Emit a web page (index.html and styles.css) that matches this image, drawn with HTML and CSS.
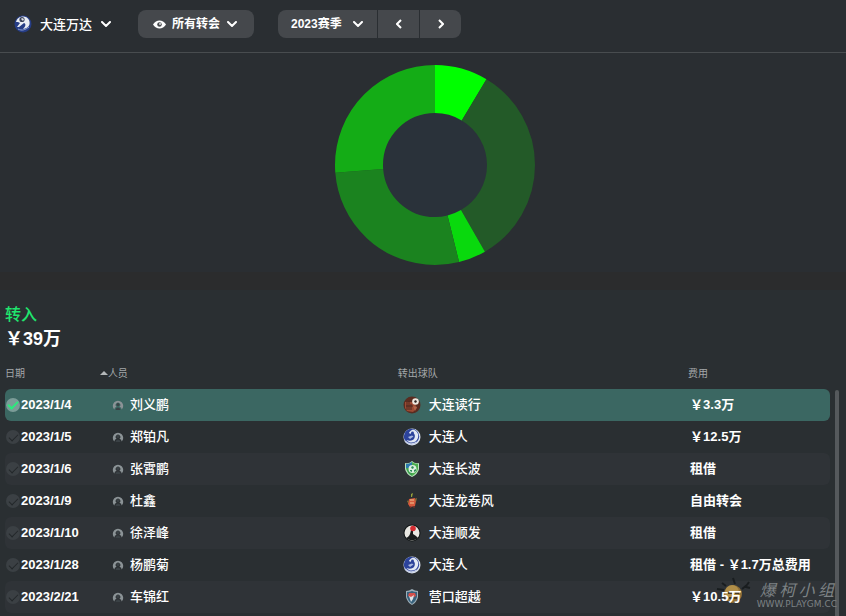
FILE: index.html
```html
<!DOCTYPE html>
<html lang="zh-CN">
<head>
    <meta charset="UTF-8">
    <meta name="viewport" content="width=device-width, initial-scale=1.0">
    <title>大连万达 - 转会</title>
    <link rel="stylesheet" href="styles.css">
</head>
<body>
    <svg class="sprite" aria-hidden="true">
        <symbol id="chevron" viewBox="0 0 10 6"><path d="M1 1l4 4 4-4" fill="none" stroke="#fff" stroke-width="2" stroke-linecap="round"/></symbol>
        <symbol id="person" viewBox="0 0 12 12">
            <path d="M2.4 10.6A5.200 5.200 0 1 1 9.600 10.600L9.200 8.800 7.400 7.800A2.300 2.300 0 1 0 4.600 7.800L2.800 8.800z" fill="#8b9396"/>
            <circle cx="6" cy="5.400" r="1.500" fill="#3a4145"/>
            <path d="M3.500 11q.3-2.500 2.500-2.500T8.500 11z" fill="#3a4145"/>
        </symbol>
        <symbol id="crest-dalian" viewBox="0 0 18 18">
            <circle cx="9" cy="9" r="8.500" fill="#dfe5f0"/>
            <circle cx="8.500" cy="8.500" r="7.700" fill="#2c439b"/>
            <path d="M10 1.500C16 3 17 10 12.500 13.500 9 15.500 5 14.500 3.500 12c3.500 1.500 7 .5 8-2 1-2.500 0-5-2.500-5.500L7 6 6 4.500 8 2.500z" fill="#e3e9f4"/>
            <path d="M5 9l4-1.500 1.500 1L7 11z" fill="#a9b8de"/>
            <circle cx="9.500" cy="5" r="1.400" fill="#2c439b"/>
            <path d="M2 13c3 3.500 8 4 12 1" fill="none" stroke="#c6d0e8" stroke-width="1.500"/>
        </symbol>
        <symbol id="crest-wanda" viewBox="0 0 18 18">
            <circle cx="9" cy="9" r="8.500" fill="#263d86"/>
            <path d="M2 7C3 1 12-1 15 5c2 5-1 8-6 9 3-3 3-5 1-6l-5 4-2 0 3-4-2-1z" fill="#e9edf3"/>
            <circle cx="8" cy="4.500" r="2.600" fill="#39415a"/>
            <path d="M7 4l1-1 2 1-1 2z" fill="#dde0e6"/>
            <path d="M4 14c4 2 7 1 11-2" fill="none" stroke="#8da0d5"/>
        </symbol>
        <symbol id="crest-duxing" viewBox="0 0 18 18">
            <circle cx="9" cy="9" r="8.500" fill="#5a2c20"/>
            <path d="M2 6h9l3 6-4 4-6-1-2-3z" fill="#9c4a33"/>
            <path d="M4 6v8M6 5v9M8 8v6M3 10h7" stroke="#4a2820"/>
            <circle cx="12.500" cy="5.500" r="3.300" fill="#eee8df"/>
            <path d="M12 4l2 1-1 2-2-1z" fill="#302624"/>
            <path d="M10 10l4 1-2 4z" fill="#b1664b"/>
        </symbol>
        <symbol id="crest-changbo" viewBox="0 0 18 18">
            <path d="M2 3q4 1 7-2 3 3 7 2v6q-1 5-7 8-6-3-7-8z" fill="#b9e2bd"/>
            <path d="M3 4q3 0 6-2v6H3z" fill="#2c79ae"/>
            <path d="M9 2q3 2 6 2v5q-1 4-6 7z" fill="#4cae4f"/>
            <path d="M3 8h6v8q-5-3-6-8z" fill="#3ca14e"/>
            <circle cx="9.500" cy="9" r="4" fill="#dcefe0"/>
            <path d="M8 7l2-1 1 2-2 1zM11 10l2-1v2l-2 1zM7 10l2 0 0 2-2-1z" fill="#2f8a5a"/>
        </symbol>
        <symbol id="crest-tornado" viewBox="0 0 18 18">
            <path d="M8 5l0-3 2-1-1 4z" fill="#97a33a"/>
            <path d="M6 7l6-1 1 3-1 5-5 1-2-3z" fill="#d55a3c"/>
            <path d="M7 8h4M7 11h4" stroke="#f0c492"/>
            <path d="M12 7l2-1-1 4zM5 8L4 10l2 1z" fill="#8b7436"/>
            <path d="M7 14l1 2M11 14v2" stroke="#8b3028"/>
        </symbol>
        <symbol id="crest-shunfa" viewBox="0 0 18 18">
            <circle cx="9" cy="9" r="8.500" fill="#111516"/>
            <circle cx="9" cy="9" r="7.500" fill="#e8e7e2"/>
            <path d="M3 14c3-1 4-3 5-8l2 0 0 4 3 2 2 2c-3 3-9 3-12 0z" fill="#171a1b"/>
            <circle cx="10" cy="4.500" r="2.800" fill="#d52d32"/>
        </symbol>
        <symbol id="crest-yingkou" viewBox="0 0 18 18">
            <path d="M3 3q3 0 6-2 3 2 6 2v6q-1 5-6 8-5-3-6-8z" fill="#9caeb8"/>
            <path d="M4 4q3 0 5-1 2 1 5 1v5q-1 4-5 7-4-3-5-7z" fill="#37617c"/>
            <path d="M6 5h6l1 3-4 2-4-2z" fill="#d3514c"/>
            <path d="M6 8l2 1 3-2-1 4-2 3z" fill="#dce4e8"/>
        </symbol>
    </svg>

    <header class="toolbar">
        <div class="field team">
            <svg class="team-crest" aria-hidden="true"><use href="#crest-wanda"/></svg>
            <select aria-label="球队"><option>大连万达</option></select>
            <svg class="chevron" aria-hidden="true"><use href="#chevron"/></svg>
        </div>
        <div class="field filter">
            <svg class="eye" viewBox="0 0 12 8" aria-hidden="true">
                <path d="M0 4C3-1 9-1 12 4 9 9 3 9 0 4z" fill="#fff"/>
                <circle cx="6" cy="4" r="2.100" fill="#45484c"/>
                <circle cx="6.500" cy="3.500" r=".8" fill="#fff"/>
            </svg>
            <select aria-label="转会类型"><option>所有转会</option></select>
            <svg class="chevron" aria-hidden="true"><use href="#chevron"/></svg>
        </div>
        <div class="season">
            <div class="field season-select">
                <select aria-label="赛季"><option>2023赛季</option></select>
                <svg class="chevron" aria-hidden="true"><use href="#chevron"/></svg>
            </div>
            <button type="button" aria-label="上一赛季">
                <svg class="arrow" viewBox="0 0 6 10"><path d="M5 1L1 5l4 4" fill="none" stroke="#fff" stroke-width="2"/></svg>
            </button>
            <button type="button" aria-label="下一赛季">
                <svg class="arrow" viewBox="0 0 6 10"><path d="M1 1l4 4-4 4" fill="none" stroke="#fff" stroke-width="2"/></svg>
            </button>
        </div>
    </header>

    <section class="chart">
        <svg class="donut" viewBox="0 0 200 200" role="img" aria-label="转会费用分布">
            <circle cx="100" cy="100" r="54" fill="#2a323a"/>
            <g class="slices" fill="none" stroke-width="48" transform="rotate(-90 100 100)">
                <circle cx="100" cy="100" r="76" pathLength="360" stroke="#00ff00" stroke-dasharray="31 329"/>
                <circle cx="100" cy="100" r="76" pathLength="360" stroke="#235a28" stroke-dasharray="119 241" stroke-dashoffset="-31"/>
                <circle cx="100" cy="100" r="76" pathLength="360" stroke="#09d90d" stroke-dasharray="16 344" stroke-dashoffset="-150"/>
                <circle cx="100" cy="100" r="76" pathLength="360" stroke="#1b831f" stroke-dasharray="99.5 260.5" stroke-dashoffset="-166"/>
                <circle cx="100" cy="100" r="76" pathLength="360" stroke="#14ac16" stroke-dasharray="94.5 265.5" stroke-dashoffset="-265.5"/>
            </g>
        </svg>
    </section>

    <main class="transfers">
        <h1>转入</h1>
        <p class="total">￥39万</p>
        <div class="table-area">
            <table>
                <colgroup>
                    <col class="col-date">
                    <col class="col-person">
                    <col class="col-club">
                    <col class="col-fee">
                </colgroup>
                <thead>
                    <tr>
                        <th>日期</th>
                        <th><button type="button" class="sort">人员</button></th>
                        <th>转出球队</th>
                        <th>费用</th>
                    </tr>
                </thead>
                <tbody>
                    <tr class="selected">
                        <td><label class="date"><input type="checkbox" checked>2023/1/4</label></td>
                        <td><div class="person"><svg><use href="#person"/></svg>刘义鹏</div></td>
                        <td><div class="club"><svg><use href="#crest-duxing"/></svg>大连读行</div></td>
                        <td><div class="fee">￥3.3万</div></td>
                    </tr>
                    <tr>
                        <td><label class="date"><input type="checkbox">2023/1/5</label></td>
                        <td><div class="person"><svg><use href="#person"/></svg>郑铂凡</div></td>
                        <td><div class="club"><svg><use href="#crest-dalian"/></svg>大连人</div></td>
                        <td><div class="fee">￥12.5万</div></td>
                    </tr>
                    <tr>
                        <td><label class="date"><input type="checkbox">2023/1/6</label></td>
                        <td><div class="person"><svg><use href="#person"/></svg>张霄鹏</div></td>
                        <td><div class="club"><svg><use href="#crest-changbo"/></svg>大连长波</div></td>
                        <td><div class="fee">租借</div></td>
                    </tr>
                    <tr>
                        <td><label class="date"><input type="checkbox">2023/1/9</label></td>
                        <td><div class="person"><svg><use href="#person"/></svg>杜鑫</div></td>
                        <td><div class="club"><svg><use href="#crest-tornado"/></svg>大连龙卷风</div></td>
                        <td><div class="fee">自由转会</div></td>
                    </tr>
                    <tr>
                        <td><label class="date"><input type="checkbox">2023/1/10</label></td>
                        <td><div class="person"><svg><use href="#person"/></svg>徐泽峰</div></td>
                        <td><div class="club"><svg><use href="#crest-shunfa"/></svg>大连顺发</div></td>
                        <td><div class="fee">租借</div></td>
                    </tr>
                    <tr>
                        <td><label class="date"><input type="checkbox">2023/1/28</label></td>
                        <td><div class="person"><svg><use href="#person"/></svg>杨鹏菊</div></td>
                        <td><div class="club"><svg><use href="#crest-dalian"/></svg>大连人</div></td>
                        <td><div class="fee">租借 - ￥1.7万总费用</div></td>
                    </tr>
                    <tr>
                        <td><label class="date"><input type="checkbox">2023/2/21</label></td>
                        <td><div class="person"><svg><use href="#person"/></svg>车锦红</div></td>
                        <td><div class="club"><svg><use href="#crest-yingkou"/></svg>营口超越</div></td>
                        <td><div class="fee">￥10.5万</div></td>
                    </tr>
                </tbody>
            </table>
            <div class="scrollbar"></div>
        </div>
    </main>

    <div class="watermark">
        <svg viewBox="0 0 40 36" aria-hidden="true">
            <path d="M11 10L7 7M20 8l-2-6M27 13l5-4M9 14l-7-1M31 11l4 1M32 9l2-3" stroke="#191d1f" stroke-width="2" fill="none"/>
            <circle cx="18" cy="18" r="9" fill="#8f7038"/>
            <circle cx="17" cy="16" r="7" fill="#b8964c" opacity=".8"/>
            <path d="M13 17h4M20 17h4M14 22h8" stroke="#49391f" stroke-width="2"/>
        </svg>
        <div class="watermark-text">
            <div class="watermark-name"><span>爆</span><span>柯</span><span>小</span><span>组</span></div>
            <div class="watermark-url">WWW.PLAYGM.CC</div>
        </div>
    </div>
</body>
</html>
```
FILE: styles.css
```css
* {
    box-sizing: border-box;
}
body {
    margin: 0;
    min-height: 100vh;
    display: flex;
    flex-direction: column;
    background: #2a2e32;
    color: #fff;
    font-family: "Liberation Sans", "Noto Sans CJK SC", sans-serif;
    font-size: 13px;
    font-weight: 700;
}
.sprite {
    display: none;
}
button,
select {
    font: inherit;
    color: inherit;
    background: none;
    border: 0;
    padding: 0;
    margin: 0;
}
select {
    appearance: none;
}
select option {
    color: #222;
}
.toolbar {
    display: flex;
    align-items: center;
    height: 53px;
    padding: 0 14px 4px;
    border-bottom: 1px solid #484c4f;
}
.field {
    display: flex;
    align-items: center;
    height: 28px;
}
.chevron {
    width: 10px;
    height: 6px;
}
.team {
    gap: 8px;
    margin-right: 27px;
    font-weight: 500;
}
.team-crest {
    width: 18px;
    height: 18px;
}
.filter {
    gap: 6px;
    padding: 0 17px 0 15px;
    margin-right: 24px;
    border-radius: 8px;
    background: #45484c;
    font-size: 12px;
}
.eye {
    width: 13px;
    height: 9px;
}
.season {
    display: flex;
    gap: 1px;
    height: 28px;
    border-radius: 8px;
    overflow: hidden;
    font-size: 12px;
}
.season-select {
    gap: 11px;
    padding: 0 14px 0 13px;
    background: #45484c;
}
.season button {
    width: 41px;
    background: #45484c;
    display: flex;
    align-items: center;
    justify-content: center;
}
.arrow {
    width: 6px;
    height: 10px;
}
.chart {
    display: flex;
    justify-content: center;
    padding: 12px 0 7px 24px;
}
.donut {
    width: 200px;
    height: 200px;
}
.transfers {
    flex: 1;
    display: flex;
    flex-direction: column;
    border-top: 18px solid #2b2c2d;
    background: #2a2f32;
    padding: 13px 7px 0 5px;
}
h1 {
    margin: 0;
    color: #1fe66e;
    font-size: 16px;
    font-weight: 500;
    line-height: 24px;
}
.total {
    margin: 0;
    font-size: 18px;
    line-height: 24px;
}
.table-area {
    flex: 1;
    display: flex;
    gap: 5px;
    padding-top: 7px;
}
table {
    flex: 1;
    align-self: flex-start;
    table-layout: fixed;
    border-collapse: separate;
    border-spacing: 0;
}
.col-date {
    width: 11.5%;
}
.col-person {
    width: 36.1%;
}
.col-club {
    width: 35.2%;
}
.col-fee {
    width: 17.2%;
}
th {
    height: 31px;
    padding: 0 0 2px;
    color: #a3a7a9;
    font-size: 10px;
    font-weight: 400;
    text-align: left;
}
.sort {
    display: flex;
    align-items: center;
}
.sort::before {
    content: '';
    border: 4px solid transparent;
    border-top: 0;
    border-bottom-color: #b4b8ba;
}
td {
    height: 32px;
    padding: 0;
    line-height: 18px;
    white-space: nowrap;
}
tbody tr:nth-child(odd) td {
    background: #2f3337;
}
tbody tr.selected td {
    background: #3b6762;
}
td:first-child {
    border-radius: 6px 0 0 6px;
}
td:last-child {
    border-radius: 0 6px 6px 0;
}
.date,
.person,
.club {
    display: flex;
    align-items: center;
}
.date {
    gap: 1px;
    padding-left: 1px;
}
.date input {
    appearance: none;
    display: flex;
    align-items: center;
    justify-content: center;
    width: 14px;
    height: 14px;
    margin: 0;
    border-radius: 50%;
    background: #3b4044;
}
.date input::after {
    content: '';
    width: 8px;
    height: 4px;
    margin-bottom: 2px;
    border-left: 1px solid #23272a;
    border-bottom: 1px solid #23272a;
    transform: rotate(-45deg);
}
.date input:checked {
    background: #7b9c98;
}
.date input:checked::after {
    border-width: 2px;
    border-color: #2bea7c;
}
.person {
    gap: 6px;
    padding-left: 12px;
    font-weight: 500;
}
.person svg {
    width: 12px;
    height: 12px;
}
.club {
    gap: 8px;
    padding-left: 5px;
    font-weight: 500;
}
.club svg {
    width: 18px;
    height: 18px;
}
/* fees stay readable above the site mark */
.fee {
    position: relative;
    z-index: 2;
    padding-left: 2px;
}
.scrollbar {
    width: 4px;
    margin-top: 32px;
    border-radius: 2px 2px 0 0;
    background: #55595c;
}
/* site mark over the bottom right corner */
.watermark {
    position: absolute;
    z-index: 1;
    right: 9px;
    bottom: 4px;
    display: flex;
    align-items: center;
    gap: 2px;
    color: #7d8285;
    pointer-events: none;
}
.watermark svg {
    width: 40px;
    height: 36px;
}
.watermark-name {
    display: flex;
    justify-content: space-between;
    padding: 0 3px;
    font-family: "Noto Sans CJK SC", sans-serif;
    font-size: 16px;
    font-weight: 400;
    font-style: italic;
    line-height: 20px;
}
.watermark-url {
    font-family: "DejaVu Sans", sans-serif;
    font-size: 9px;
    font-weight: 400;
    line-height: 10px;
}
```
